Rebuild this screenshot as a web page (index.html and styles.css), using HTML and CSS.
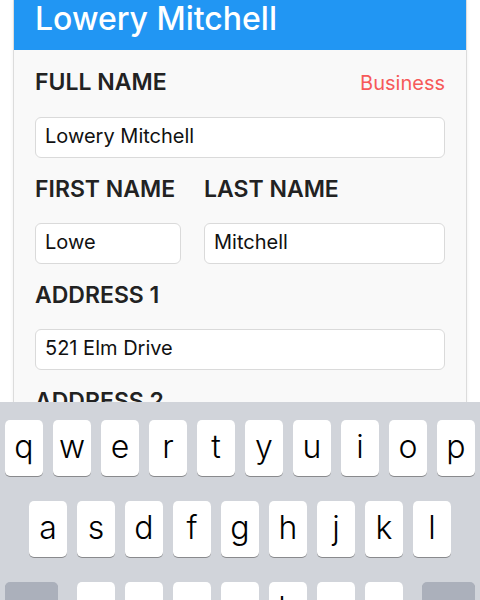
FILE: index.html
```html
<!DOCTYPE html>
<html lang="en">
<head>
    <meta charset="UTF-8">
    <meta name="viewport" content="width=device-width, initial-scale=1.0">
    <title>Edit Contact</title>
    <link rel="stylesheet" href="styles.css">
</head>
<body>
    <!-- Contact card -->
    <div class="card">
        <div class="card-header">Lowery Mitchell</div>

        <form class="card-body">
            <div class="field">
                <div class="field-label">
                    <label for="full-name">FULL NAME</label>
                    <span class="tag">Business</span>
                </div>
                <input type="text" id="full-name" value="Lowery Mitchell">
            </div>

            <div class="field field-split">
                <div>
                    <div class="field-label"><label for="first-name">FIRST NAME</label></div>
                    <input type="text" id="first-name" value="Lowe">
                </div>
                <div>
                    <div class="field-label"><label for="last-name">LAST NAME</label></div>
                    <input type="text" id="last-name" value="Mitchell">
                </div>
            </div>

            <div class="field">
                <div class="field-label"><label for="address-1">ADDRESS 1</label></div>
                <input type="text" id="address-1" value="521 Elm Drive">
            </div>

            <div class="field">
                <div class="field-label"><label for="address-2">ADDRESS 2</label></div>
                <input type="text" id="address-2" value="">
            </div>
        </form>
    </div>

    <!-- On-screen keyboard -->
    <div class="keyboard">
        <div class="key-row">
            <span class="key">q</span><span class="key">w</span><span class="key">e</span><span class="key">r</span><span class="key">t</span><span class="key">y</span><span class="key">u</span><span class="key">i</span><span class="key">o</span><span class="key">p</span>
        </div>
        <div class="key-row">
            <span class="key">a</span><span class="key">s</span><span class="key">d</span><span class="key">f</span><span class="key">g</span><span class="key">h</span><span class="key">j</span><span class="key">k</span><span class="key">l</span>
        </div>
        <div class="key-row key-row-last">
            <span class="key key-fn">
                <svg width="22" height="20" viewBox="0 0 22 20"><path d="M11 1 L21 11 H15.5 V19 H6.5 V11 H1 Z" fill="none" stroke="#000" stroke-width="1.6" stroke-linejoin="round"/></svg>
            </span>
            <div class="key-group">
                <span class="key">z</span><span class="key">x</span><span class="key">c</span><span class="key">v</span><span class="key">b</span><span class="key">n</span><span class="key">m</span>
            </div>
            <span class="key key-fn">
                <svg width="28" height="20" viewBox="0 0 28 20"><path d="M9 1 H25 Q27 1 27 3 V17 Q27 19 25 19 H9 L1 10 Z" fill="none" stroke="#000" stroke-width="1.6" stroke-linejoin="round"/><path d="M13 6 L21 14 M21 6 L13 14" stroke="#000" stroke-width="1.6"/></svg>
            </span>
        </div>
    </div>
</body>
</html>
```

FILE: styles.css
```css
body {
    font-family: Inter, "Liberation Sans", sans-serif;
    margin: 0;
    padding: 0;
    background-color: #fff;
}

.card {
    margin: 0 13px;
    border: 1px solid #dcdcdc;
    border-top: none;
    background-color: #f9f9f9;
    box-shadow: 0px 0px 4px rgba(0, 0, 0, 0.06);
}

.card-header {
    background-color: #2196f3;
    color: #fff;
    font-size: 32px;
    font-weight: 500;
    line-height: 37px;
    height: 50px;
    padding: 0 21px;
    box-sizing: border-box;
}

.card-body {
    padding: 19px 21px 40px;
}

.field {
    margin-bottom: 18px;
}

.field-split {
    display: grid;
    grid-template-columns: 146px 1fr;
    column-gap: 23px;
}

.field-label {
    display: flex;
    justify-content: space-between;
    align-items: baseline;
    line-height: 26px;
    margin-bottom: 21px;
}

.field-label label {
    font-size: 23px;
    font-weight: 600;
    color: #222;
}

.tag {
    font-size: 20px;
    color: #f65a5a;
}

input[type="text"] {
    display: block;
    width: 100%;
    height: 41px;
    box-sizing: border-box;
    padding: 0 9px 3px;
    border: 1px solid #dadada;
    border-radius: 6px;
    background-color: #fff;
    font-family: Inter, "Liberation Sans", sans-serif;
    font-size: 20px;
    color: #111;
}

.keyboard {
    position: fixed;
    left: 0;
    right: 0;
    top: 402px;
    bottom: 0;
    background-color: #d1d4da;
    padding: 18px 5px 0;
    box-sizing: border-box;
    overflow: hidden;
}

.key-row {
    display: flex;
    justify-content: center;
    gap: 10px;
    margin-bottom: 25px;
}

.key-row-last {
    justify-content: space-between;
}

.key-group {
    display: flex;
    gap: 10px;
}

.key {
    width: 38px;
    height: 56px;
    background-color: #fff;
    border-radius: 5px;
    box-shadow: 0 1px 0 #898a8d;
    display: flex;
    align-items: center;
    justify-content: center;
    font-size: 32px;
    font-weight: 300;
    color: #000;
    padding-bottom: 4px;
    box-sizing: border-box;
}

.key-fn {
    width: 53px;
    background-color: #abb0bb;
    padding-bottom: 0;
}
```
